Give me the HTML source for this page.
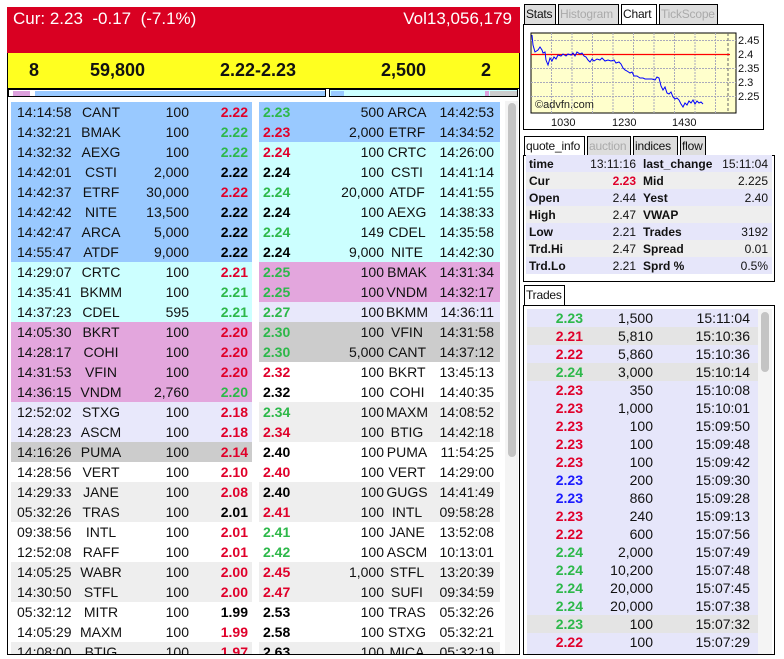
<!DOCTYPE html>
<html><head><meta charset="utf-8"><style>
*{margin:0;padding:0;box-sizing:border-box}
body{width:784px;height:659px;background:#fff;font-family:"Liberation Sans",Arial,sans-serif;position:relative;overflow:hidden;color:#111}
.abs{position:absolute}
#hdr{left:7px;top:7px;width:513px;height:46px;background:#d90022;color:#fff;font-size:17px}
#yel{left:7px;top:53px;width:513px;height:35px;background:#ffff20;font-weight:bold;font-size:18px;border-left:1px solid #000;border-right:1px solid #000}
#yel span{position:absolute;top:7px}
#panel{left:7px;top:97px;width:513px;height:558px;border:1px solid #000;border-top:none;overflow:hidden}
table{border-collapse:collapse;font-size:14px;position:absolute;table-layout:fixed}
td{height:20px;padding:0;white-space:nowrap;overflow:hidden}
.B td{background:#99c9ff}.C td{background:#ccffff}.P td{background:#e3a6dd}.L td{background:#e8e8fb}.G td{background:#cccccc}.E td{background:#eeeeee}.W td{background:#fff}
.r{color:#e0002a;font-weight:bold}.g{color:#2db84a;font-weight:bold}.k{color:#000;font-weight:bold}.bl{color:#1a1aff;font-weight:bold}
#L td:nth-child(1){padding-left:6px}#L td:nth-child(2){text-align:center}#L td:nth-child(3){text-align:right}#L td:nth-child(4){text-align:right;padding-right:4px}
#R td:nth-child(1){padding-left:4px}#R td:nth-child(2){text-align:right}#R td:nth-child(3){text-align:center}#R td:nth-child(4){text-align:right;padding-right:6px}
.tab{position:absolute;border:1px solid #000;border-bottom:none;background:#ddd;font-size:12px;height:20px;line-height:19px;padding:0 1px;color:#111;white-space:nowrap;overflow:hidden;letter-spacing:-0.2px}
.tab.dis{color:#aaa}.tab.act{background:#fff}
#q td{height:17px;font-size:12px}
#q td:nth-child(1),#q td:nth-child(3){font-weight:bold;padding-left:3px}
#q td:nth-child(2),#q td:nth-child(4){text-align:right;padding-right:4px}
#t td{height:18px;font-size:14px}
#t td:nth-child(1),#t td:nth-child(2),#t td:nth-child(3){text-align:right}
#t tr td{background:#e6e6fa}#t tr.E td{background:#e4e4e4}
</style></head><body>
<div id="hdr" class="abs"><span class="abs" style="left:6px;top:2px">Cur: 2.23&nbsp; -0.17&nbsp; (-7.1%)</span><span class="abs" style="right:8px;top:2px">Vol13,056,179</span></div>
<div id="yel" class="abs"><span style="left:21px">8</span><span style="left:82px">59,800</span><span style="left:212px">2.22-2.23</span><span style="left:373px">2,500</span><span style="left:473px">2</span></div>
<div class="abs" style="left:7px;top:88px;width:513px;height:9px;border:1px solid #000;border-bottom:none;border-top:1px solid #000"></div>
<div class="abs" style="left:8px;top:89px;width:318px;height:8px;border:1px solid #000;background:#fff"><div class="abs" style="left:4px;top:1px;width:17px;height:5px;background:#dda0dd"></div><div class="abs" style="left:26px;top:1px;width:290px;height:5px;background:#99c9ff"></div></div>
<div class="abs" style="left:329px;top:89px;width:189px;height:8px;border:1px solid #000;background:#ccffff"><div class="abs" style="left:1px;top:1px;width:13px;height:5px;background:#99c9ff"></div><div class="abs" style="left:155px;top:1px;width:4px;height:5px;background:#dda0dd"></div><div class="abs" style="left:160px;top:1px;width:27px;height:5px;background:#ccc"></div></div>
<div id="panel" class="abs">
<table id="L" style="left:3px;top:5px;width:241px"><colgroup><col style="width:64px"><col style="width:52px"><col style="width:62px"><col style="width:63px"></colgroup>
<tr class="B"><td>14:14:58</td><td>CANT</td><td>100</td><td class="r">2.22</td></tr>
<tr class="B"><td>14:32:21</td><td>BMAK</td><td>100</td><td class="g">2.22</td></tr>
<tr class="B"><td>14:32:32</td><td>AEXG</td><td>100</td><td class="g">2.22</td></tr>
<tr class="B"><td>14:42:01</td><td>CSTI</td><td>2,000</td><td class="k">2.22</td></tr>
<tr class="B"><td>14:42:37</td><td>ETRF</td><td>30,000</td><td class="r">2.22</td></tr>
<tr class="B"><td>14:42:42</td><td>NITE</td><td>13,500</td><td class="k">2.22</td></tr>
<tr class="B"><td>14:42:47</td><td>ARCA</td><td>5,000</td><td class="k">2.22</td></tr>
<tr class="B"><td>14:55:47</td><td>ATDF</td><td>9,000</td><td class="k">2.22</td></tr>
<tr class="C"><td>14:29:07</td><td>CRTC</td><td>100</td><td class="r">2.21</td></tr>
<tr class="C"><td>14:35:41</td><td>BKMM</td><td>100</td><td class="g">2.21</td></tr>
<tr class="C"><td>14:37:23</td><td>CDEL</td><td>595</td><td class="g">2.21</td></tr>
<tr class="P"><td>14:05:30</td><td>BKRT</td><td>100</td><td class="r">2.20</td></tr>
<tr class="P"><td>14:28:17</td><td>COHI</td><td>100</td><td class="r">2.20</td></tr>
<tr class="P"><td>14:31:53</td><td>VFIN</td><td>100</td><td class="r">2.20</td></tr>
<tr class="P"><td>14:36:15</td><td>VNDM</td><td>2,760</td><td class="g">2.20</td></tr>
<tr class="L"><td>12:52:02</td><td>STXG</td><td>100</td><td class="r">2.18</td></tr>
<tr class="L"><td>14:28:23</td><td>ASCM</td><td>100</td><td class="r">2.18</td></tr>
<tr class="G"><td>14:16:26</td><td>PUMA</td><td>100</td><td class="r">2.14</td></tr>
<tr class="W"><td>14:28:56</td><td>VERT</td><td>100</td><td class="r">2.10</td></tr>
<tr class="E"><td>14:29:33</td><td>JANE</td><td>100</td><td class="r">2.08</td></tr>
<tr class="E"><td>05:32:26</td><td>TRAS</td><td>100</td><td class="k">2.01</td></tr>
<tr class="W"><td>09:38:56</td><td>INTL</td><td>100</td><td class="r">2.01</td></tr>
<tr class="W"><td>12:52:08</td><td>RAFF</td><td>100</td><td class="r">2.01</td></tr>
<tr class="E"><td>14:05:25</td><td>WABR</td><td>100</td><td class="r">2.00</td></tr>
<tr class="E"><td>14:30:50</td><td>STFL</td><td>100</td><td class="r">2.00</td></tr>
<tr class="W"><td>05:32:12</td><td>MITR</td><td>100</td><td class="k">1.99</td></tr>
<tr class="W"><td>14:05:29</td><td>MAXM</td><td>100</td><td class="r">1.99</td></tr>
<tr class="E"><td>14:08:00</td><td>BTIG</td><td>100</td><td class="r">1.97</td></tr>
</table>
<table id="R" style="left:251px;top:5px;width:241px"><colgroup><col style="width:51px"><col style="width:74px"><col style="width:46px"><col style="width:70px"></colgroup>
<tr class="B"><td class="g">2.23</td><td>500</td><td>ARCA</td><td>14:42:53</td></tr>
<tr class="B"><td class="r">2.23</td><td>2,000</td><td>ETRF</td><td>14:34:52</td></tr>
<tr class="C"><td class="r">2.24</td><td>100</td><td>CRTC</td><td>14:26:00</td></tr>
<tr class="C"><td class="k">2.24</td><td>100</td><td>CSTI</td><td>14:41:14</td></tr>
<tr class="C"><td class="g">2.24</td><td>20,000</td><td>ATDF</td><td>14:41:55</td></tr>
<tr class="C"><td class="k">2.24</td><td>100</td><td>AEXG</td><td>14:38:33</td></tr>
<tr class="C"><td class="g">2.24</td><td>149</td><td>CDEL</td><td>14:35:58</td></tr>
<tr class="C"><td class="k">2.24</td><td>9,000</td><td>NITE</td><td>14:42:30</td></tr>
<tr class="P"><td class="g">2.25</td><td>100</td><td>BMAK</td><td>14:31:34</td></tr>
<tr class="P"><td class="g">2.25</td><td>100</td><td>VNDM</td><td>14:32:17</td></tr>
<tr class="L"><td class="g">2.27</td><td>100</td><td>BKMM</td><td>14:36:11</td></tr>
<tr class="G"><td class="g">2.30</td><td>100</td><td>VFIN</td><td>14:31:58</td></tr>
<tr class="G"><td class="g">2.30</td><td>5,000</td><td>CANT</td><td>14:37:12</td></tr>
<tr class="W"><td class="r">2.32</td><td>100</td><td>BKRT</td><td>13:45:13</td></tr>
<tr class="W"><td class="k">2.32</td><td>100</td><td>COHI</td><td>14:40:35</td></tr>
<tr class="E"><td class="g">2.34</td><td>100</td><td>MAXM</td><td>14:08:52</td></tr>
<tr class="E"><td class="r">2.34</td><td>100</td><td>BTIG</td><td>14:42:18</td></tr>
<tr class="W"><td class="k">2.40</td><td>100</td><td>PUMA</td><td>11:54:25</td></tr>
<tr class="W"><td class="r">2.40</td><td>100</td><td>VERT</td><td>14:29:00</td></tr>
<tr class="E"><td class="k">2.40</td><td>100</td><td>GUGS</td><td>14:41:49</td></tr>
<tr class="E"><td class="r">2.41</td><td>100</td><td>INTL</td><td>09:58:28</td></tr>
<tr class="W"><td class="g">2.41</td><td>100</td><td>JANE</td><td>13:52:08</td></tr>
<tr class="W"><td class="g">2.42</td><td>100</td><td>ASCM</td><td>10:13:01</td></tr>
<tr class="E"><td class="r">2.45</td><td>1,000</td><td>STFL</td><td>13:20:39</td></tr>
<tr class="E"><td class="r">2.47</td><td>100</td><td>SUFI</td><td>09:34:59</td></tr>
<tr class="W"><td class="k">2.53</td><td>100</td><td>TRAS</td><td>05:32:26</td></tr>
<tr class="W"><td class="k">2.58</td><td>100</td><td>STXG</td><td>05:32:21</td></tr>
<tr class="E"><td class="k">2.63</td><td>100</td><td>MICA</td><td>05:32:19</td></tr>
</table>
<div class="abs" style="left:497px;top:4px;width:13px;height:553px;background:#f4f4f4"></div>
<div class="abs" style="left:500px;top:6px;width:8px;height:354px;background:#c4c4c4;border-radius:4px"></div>
</div>

<div class="tab" style="left:524px;top:4px;width:32px">Stats</div>
<div class="tab dis" style="left:558px;top:4px;width:61px">Histogram</div>
<div class="tab act" style="left:621px;top:4px;width:36px;height:21px">Chart</div>
<div class="tab dis" style="left:659px;top:4px;width:59px">TickScope</div>
<div class="abs" style="left:523px;top:24px;width:241px;height:106px;border:1px solid #000;background:#fff"></div>
<svg class="abs" style="left:0;top:0" width="784" height="140">
<rect x="531" y="33" width="205" height="80" fill="#ffffcc" stroke="#000"/>
<g stroke="#aab" stroke-dasharray="2,1" stroke-width="1">
<line x1="551.5" y1="33" x2="551.5" y2="113"/><line x1="572" y1="33" x2="572" y2="113"/><line x1="592.5" y1="33" x2="592.5" y2="113"/><line x1="613" y1="33" x2="613" y2="113"/><line x1="633.5" y1="33" x2="633.5" y2="113"/><line x1="654" y1="33" x2="654" y2="113"/><line x1="674.5" y1="33" x2="674.5" y2="113"/><line x1="695" y1="33" x2="695" y2="113"/><line x1="715.5" y1="33" x2="715.5" y2="113"/>
<line x1="531" y1="40.5" x2="736" y2="40.5"/><line x1="531" y1="68.5" x2="736" y2="68.5"/><line x1="531" y1="82.5" x2="736" y2="82.5"/><line x1="531" y1="96.5" x2="736" y2="96.5"/>
</g>
<line x1="728" y1="33" x2="728" y2="113" stroke="#666" stroke-dasharray="3,2"/>
<line x1="531" y1="54.5" x2="730" y2="54.5" stroke="#f00" stroke-width="1.3"/>
<polyline fill="none" stroke="#00f" stroke-width="1" points="532,35 533,45 535,52 538,50 540,47 542,50 543,53 545,52 546,60 548,65 550,58 552,61 554,57 556,59 558,55 561,56 563,54 566,56 568,54 571,55 573,53 575,56 577,52 580,54 582,53 584,56 586,57 588,60 590,62 592,59 594,61 597,59 600,60 602,58 605,61 608,60 611,61 614,60 616,63 619,62 621,64 623,68 625,70 627,71 630,73 632,72 634,76 637,76 640,78 643,78 645,79 648,79 652,79 655,80 657,77 659,78 661,86 663,90 665,87 667,93 669,94 671,92 673,97 675,99 677,98 679,100 681,104 683,107 685,103 687,105 689,101 691,103 693,100 695,104 697,101 699,103 701,102 703,104"/>
<text x="535" y="108" font-family="Liberation Sans" font-size="11" fill="#222">©advfn.com</text>
<g font-family="Liberation Sans" font-size="11" fill="#111">
<text x="738" y="44">2.45</text><text x="738" y="58">2.4</text><text x="738" y="72">2.35</text><text x="738" y="86">2.3</text><text x="738" y="100">2.25</text>
<text x="551" y="126">1030</text><text x="612" y="126">1230</text><text x="672" y="126">1430</text>
</g>
</svg>

<div class="tab act" style="left:524px;top:136px;width:61px;height:20px">quote_info</div>
<div class="tab dis" style="left:587px;top:136px;width:44px">auction</div>
<div class="tab" style="left:633px;top:136px;width:45px">indices</div>
<div class="tab" style="left:680px;top:136px;width:26px">flow</div>
<div class="abs" style="left:523px;top:155px;width:252px;height:127px;border:1px solid #000;background:#fff"></div>
<table id="q" style="left:526px;top:155px;width:246px"><colgroup><col style="width:50px"><col style="width:64px"><col style="width:72px"><col style="width:60px"></colgroup>
<tr style="background:#e6e6fa"><td>time</td><td>13:11:16</td><td>last_change</td><td>15:11:04</td></tr>
<tr style="background:#eeeeee"><td>Cur</td><td class="r">2.23</td><td>Mid</td><td>2.225</td></tr>
<tr style="background:#e6e6fa"><td>Open</td><td>2.44</td><td>Yest</td><td>2.40</td></tr>
<tr style="background:#eeeeee"><td>High</td><td>2.47</td><td>VWAP</td><td></td></tr>
<tr style="background:#e6e6fa"><td>Low</td><td>2.21</td><td>Trades</td><td>3192</td></tr>
<tr style="background:#eeeeee"><td>Trd.Hi</td><td>2.47</td><td>Spread</td><td>0.01</td></tr>
<tr style="background:#e6e6fa"><td>Trd.Lo</td><td>2.21</td><td>Sprd %</td><td>0.5%</td></tr>
</table>

<div class="tab act" style="left:524px;top:285px;width:41px;height:21px">Trades</div>
<div class="abs" style="left:523px;top:305px;width:252px;height:350px;border:1px solid #000;background:#fff;overflow:hidden">
<table id="t" style="left:3px;top:3px;width:231px"><colgroup><col style="width:56px"><col style="width:70px"><col style="width:97px"><col style="width:8px"></colgroup>
<tr><td class="g">2.23</td><td>1,500</td><td>15:11:04</td><td></td></tr>
<tr class="E"><td class="r">2.21</td><td>5,810</td><td>15:10:36</td><td></td></tr>
<tr><td class="r">2.22</td><td>5,860</td><td>15:10:36</td><td></td></tr>
<tr class="E"><td class="g">2.24</td><td>3,000</td><td>15:10:14</td><td></td></tr>
<tr><td class="r">2.23</td><td>350</td><td>15:10:08</td><td></td></tr>
<tr><td class="r">2.23</td><td>1,000</td><td>15:10:01</td><td></td></tr>
<tr><td class="r">2.23</td><td>100</td><td>15:09:50</td><td></td></tr>
<tr><td class="r">2.23</td><td>100</td><td>15:09:48</td><td></td></tr>
<tr><td class="r">2.23</td><td>100</td><td>15:09:42</td><td></td></tr>
<tr><td class="bl">2.23</td><td>200</td><td>15:09:30</td><td></td></tr>
<tr><td class="bl">2.23</td><td>860</td><td>15:09:28</td><td></td></tr>
<tr><td class="r">2.23</td><td>240</td><td>15:09:13</td><td></td></tr>
<tr><td class="r">2.22</td><td>600</td><td>15:07:56</td><td></td></tr>
<tr><td class="g">2.24</td><td>2,000</td><td>15:07:49</td><td></td></tr>
<tr><td class="g">2.24</td><td>10,200</td><td>15:07:48</td><td></td></tr>
<tr><td class="g">2.24</td><td>20,000</td><td>15:07:45</td><td></td></tr>
<tr><td class="g">2.24</td><td>20,000</td><td>15:07:38</td><td></td></tr>
<tr class="E"><td class="g">2.23</td><td>100</td><td>15:07:32</td><td></td></tr>
<tr><td class="r">2.22</td><td>100</td><td>15:07:29</td><td></td></tr>
<tr><td class="g">2.22</td><td>100</td><td>15:07:20</td><td></td></tr>
</table>
<div class="abs" style="left:234px;top:3px;width:14px;height:345px;background:#f4f4f4"></div>
<div class="abs" style="left:237px;top:6px;width:8px;height:60px;background:#c4c4c4;border-radius:4px"></div>
</div>
</body></html>
